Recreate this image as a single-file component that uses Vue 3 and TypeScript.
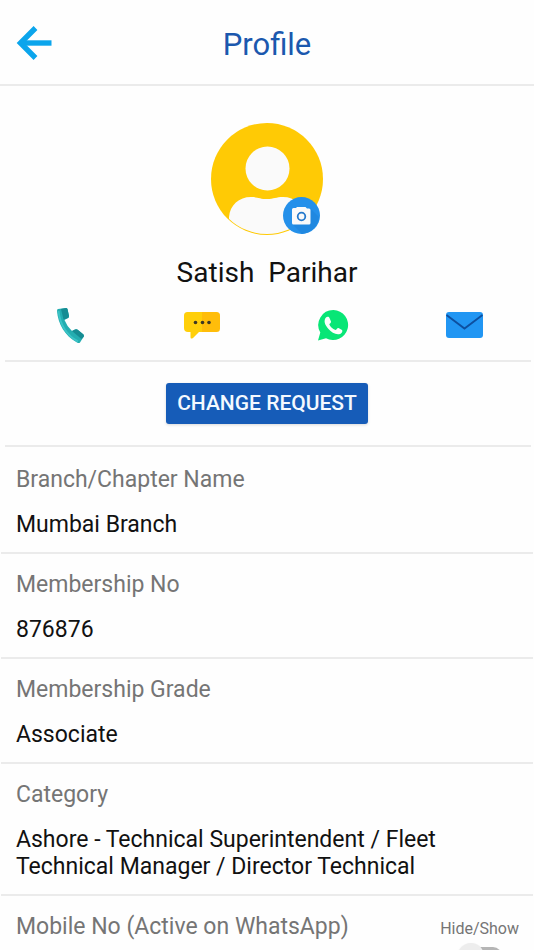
<script setup lang="ts">
import { ref } from 'vue'

interface Field {
  label: string
  value: string
}

const fields: Field[] = [
  { label: 'Branch/Chapter Name', value: 'Mumbai Branch' },
  { label: 'Membership No', value: '876876' },
  { label: 'Membership Grade', value: 'Associate' },
  {
    label: 'Category',
    value: 'Ashore - Technical Superintendent / Fleet Technical Manager / Director Technical',
  },
]

const showMobile = ref(false)
</script>

<template>
  <div class="screen">
    <header class="bar">
      <button class="icon-button" type="button" aria-label="Back">
        <svg width="36" height="36" viewBox="0 0 36 36" fill="none" stroke="#0ba5ec" stroke-width="5.400">
          <path d="M19.500 2 L4.500 17 L19.500 32" stroke-linejoin="miter" />
          <path d="M5 17 H35.500" />
        </svg>
      </button>
      <h1 class="title">Profile</h1>
    </header>

    <main class="content">
      <section class="identity">
        <div class="avatar">
          <svg width="112" height="112" viewBox="0 0 112 112">
            <defs>
              <clipPath id="face"><circle cx="56" cy="56" r="55" /></clipPath>
            </defs>
            <circle cx="56" cy="56" r="56" fill="#ffca05" />
            <g clip-path="url(#face)" fill="#fafafa">
              <circle cx="56.500" cy="45.500" r="22" />
              <path d="M18 112 V94 C19 82 28 74 40 74 C47 74 49 76 56 76 C63 76 65 74 72 74 C84 74 93 82 94 94 V112 Z" />
            </g>
          </svg>
          <button class="camera" type="button" aria-label="Change photo">
            <svg width="37" height="37" viewBox="0 0 37 37">
              <circle cx="18.500" cy="18.500" r="18.500" fill="#2490ea" />
              <path d="M28 12 L36 20 C35 29 28 36 19 37 L10 28 Z" fill="#2088e0" />
              <path d="M10.500 11 H13 L14 10 H22.500 L24 11.500 H26 Q27.500 11.500 27.500 13 V26 Q27.500 27.500 26 27.500 H10.500 Q9 27.500 9 26 V12.500 Q9 11 10.500 11 Z" fill="#fafafa" />
              <circle cx="18.500" cy="19.500" r="3.800" fill="#fafafa" stroke="#2579cc" stroke-width="1.800" />
            </svg>
          </button>
        </div>
        <h2 class="name">Satish&nbsp; Parihar</h2>

        <nav class="actions" aria-label="Contact">
          <a href="#call" aria-label="Call">
            <svg width="38" height="38" viewBox="0 0 38 38">
              <path d="M6 3 L14 2 Q15 2 15.500 3 L17 10 Q17 12 15 12.500 L12.500 14 Q15 20.500 20 25 L23 23.500 Q25 23 26 24 L31.500 28.500 Q32.500 30 31.500 31 L28 36.500 Q27 37.500 25 36.500 C13 30 6 18 5 5 Q5 3 6 3 Z" fill="#24adb0" />
              <path d="M9 3 L14 2 Q15 2 15.500 3 L17 10 Q17 12 15 12.500 L11.500 13.500 Z M20 25 L23 23.500 Q25 23 26 24 L31.500 28.500 Q32.500 30 31.500 31 L29.500 33 Z" fill="#168c93" />
              <path d="M6.500 5 C8 18 14 29 26 35.500" fill="none" stroke="#3bc3c6" stroke-width="2" />
            </svg>
          </a>
          <a href="#message" aria-label="Message">
            <svg width="38" height="38" viewBox="0 0 38 38">
              <path d="M4 6 H19 V26 H16 L10 32 Q7.500 33.500 7.500 31 V26 H5 Q1 26 1 22 V9.500 Q1 6 4.500 6 Z" fill="#ffcf0a" />
              <path d="M19 6 H33.500 Q37 6 37 9.500 V22.500 Q37 26 33.500 26 H19 Z" fill="#ffbd0a" />
              <g fill="#3c3824">
                <circle cx="12.500" cy="16.500" r="1.800" />
                <circle cx="19.500" cy="16.500" r="1.800" />
                <circle cx="26" cy="16.500" r="1.800" />
              </g>
            </svg>
          </a>
          <a href="#whatsapp" aria-label="WhatsApp">
            <svg width="38" height="38" viewBox="0 0 38 38">
              <path d="M19.500 4 A15 15 0 1 1 12 32.200 L4 34.500 L6.300 26.500 A15 15 0 0 1 19.500 4 Z" fill="#08e676" />
              <path d="M11.500 12 C13 10 15 10.500 15.500 12 L17 15.500 C17.300 17 15.500 17.500 15.300 18.500 C16.500 21 18.500 23 21.500 24 C22.500 24 23 21.800 24.500 22 L28 24 C29 25 27.800 27.500 26 28 C22 29.200 17.500 26.500 14.500 23 C11 19 9.500 15.500 11.500 12 Z" fill="#fafffc" />
            </svg>
          </a>
          <a href="#mail" aria-label="Email">
            <svg width="38" height="38" viewBox="0 0 38 38">
              <rect x="1" y="6" width="37" height="26" rx="3" fill="#2196f3" />
              <path d="M1.500 9 L19.500 22.500 L37.500 9" fill="none" stroke="#0d4f9f" stroke-width="1.800" />
            </svg>
          </a>
        </nav>
      </section>

      <section class="request">
        <button class="primary" type="button">CHANGE REQUEST</button>
      </section>

      <dl class="fields">
        <div v-for="field in fields" :key="field.label" class="field">
          <dt>{{ field.label }}</dt>
          <dd>{{ field.value }}</dd>
        </div>
        <div class="field mobile">
          <dt>Mobile No (Active on WhatsApp)</dt>
          <dd>
            <label class="toggle">
              <span>Hide/Show</span>
              <input v-model="showMobile" type="checkbox" role="switch" />
            </label>
          </dd>
        </div>
      </dl>
    </main>
  </div>
</template>

<style>
body {
  background: #fefefe;
}
</style>

<style scoped>
.screen {
  display: flex;
  flex-direction: column;
  height: 100vh;
  overflow: hidden;
  background: #fefefe;
  color: #111;
  font-family: Roboto, sans-serif;
}

button {
  border: 0;
  padding: 0;
  font-family: inherit;
  background: none;
  cursor: pointer;
}

svg {
  display: block;
}

.bar {
  flex: none;
  display: grid;
  grid-template-columns: 36px 1fr 36px;
  align-items: end;
  padding: 26px 16px 20px;
  border-bottom: 2px solid #ebebeb;
}

.title {
  margin: 0;
  text-align: center;
  font-size: 31px;
  line-height: 38px;
  font-weight: 400;
  color: #1b58ae;
}

.icon-button {
  align-self: start;
}

.content {
  flex: 1;
  min-height: 0;
  overflow-y: auto;
  scrollbar-width: none;
}

.identity,
.request {
  display: flex;
  flex-direction: column;
  align-items: center;
  margin: 0 3px 0 5px;
  border-bottom: 2px solid #ebebeb;
}

.identity {
  padding: 37px 2px 16px 0;
}

.avatar {
  position: relative;
}

.camera {
  position: absolute;
  right: 3px;
  bottom: 1px;
}

.name {
  margin: 20px 0 15px;
  font-size: 28px;
  line-height: 36px;
  font-weight: 400;
}

.actions {
  display: grid;
  grid-template-columns: repeat(4, 1fr);
  justify-items: center;
  width: 100%;
}

.request {
  padding: 21px 2px 21px 0;
}

.primary {
  padding: 0 11px;
  border-radius: 3px;
  background: #165cb8;
  color: #f4f9ff;
  font-size: 21px;
  line-height: 41px;
  font-weight: 500;
  box-shadow: 0 1px 3px rgba(0, 0, 0, 0.15);
}

.fields {
  margin: 2px 1px 0;
}

.field {
  padding: 17px 15px 14px;
  border-bottom: 2px solid #ebebeb;
  font-size: 23px;
  line-height: 27px;
}

dt {
  color: #757575;
}

dd {
  margin: 18px 0 0;
}

.mobile {
  display: flex;
  justify-content: space-between;
  padding-right: 14px;
}

.mobile dd {
  margin: 0;
}

.toggle {
  display: flex;
  flex-direction: column;
  align-items: center;
  gap: 4px;
  padding-top: 6px;
  color: #757575;
  font-size: 16px;
  line-height: 20px;
}

.toggle input {
  appearance: none;
  position: relative;
  width: 44px;
  height: 26px;
  margin: 0;
}

.toggle input::before,
.toggle input::after {
  content: '';
  position: absolute;
  border-radius: 13px;
}

.toggle input::before {
  inset: 4px 0;
  background: #b5b5b5;
}

.toggle input::after {
  top: 0;
  left: 0;
  width: 26px;
  height: 26px;
  background: #ededed;
  box-shadow: 0 1px 2px rgba(0, 0, 0, 0.15);
}

.toggle input:checked::after {
  left: 18px;
}
</style>
